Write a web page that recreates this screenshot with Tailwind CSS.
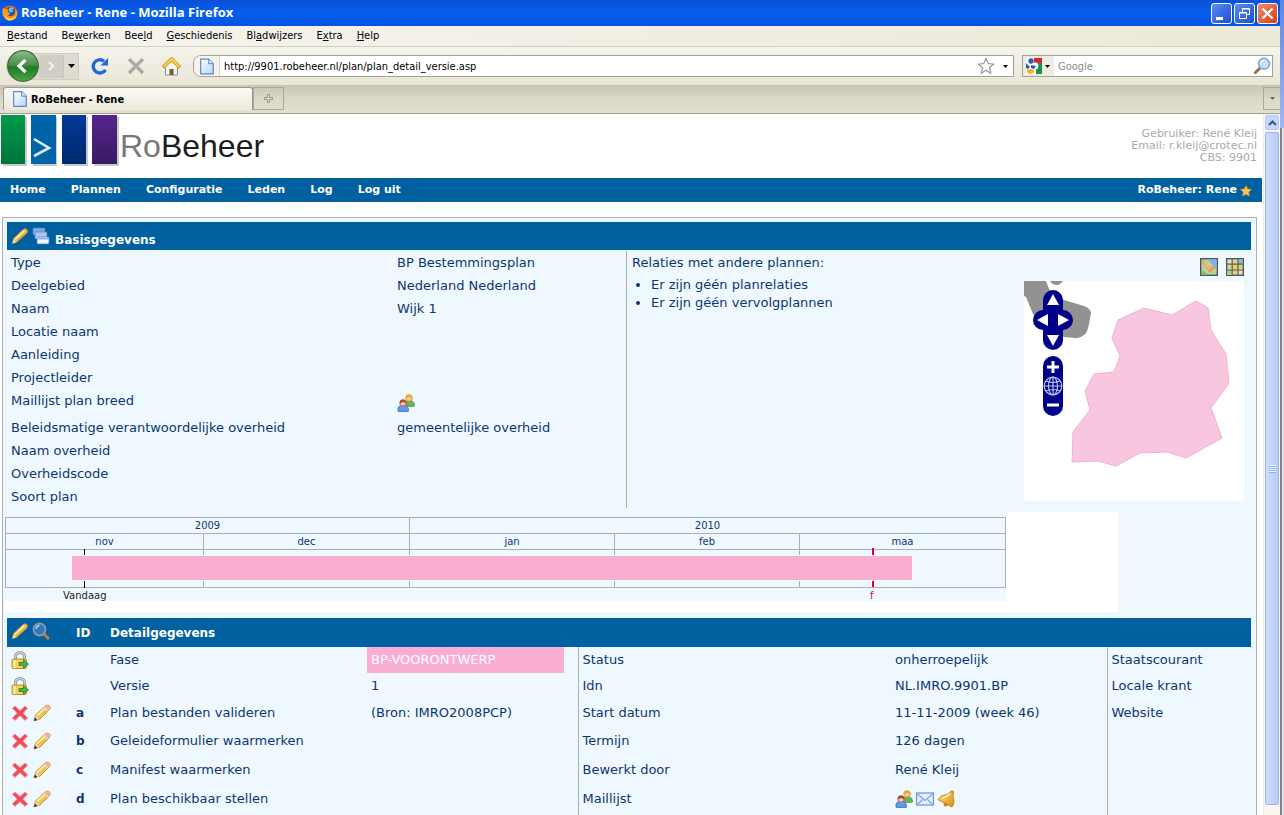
<!DOCTYPE html>
<html lang="nl">
<head>
<meta charset="utf-8">
<title>RoBeheer - Rene</title>
<script src="https://cdn.jsdelivr.net/npm/@tailwindcss/browser@4"></script>
</head>
<body class="flex h-screen overflow-hidden bg-white font-['DejaVu_Sans',Verdana,sans-serif] text-[13px] text-[#0b3672]">
<svg class="absolute size-0" aria-hidden="true">
  <defs>
    <linearGradient id="gold" x1="0" y1="0" x2="1" y2="1"><stop offset="0" stop-color="#ffe28a"/><stop offset="1" stop-color="#d98a10"/></linearGradient>
    <linearGradient id="page" x1="0" y1="0" x2="1" y2="1"><stop offset="0" stop-color="#ffffff"/><stop offset="1" stop-color="#b9d4fb"/></linearGradient>
    <linearGradient id="green" x1="0" y1="0" x2="0" y2="1"><stop offset="0" stop-color="#8fbb86"/><stop offset=".45" stop-color="#4b8f4c"/><stop offset=".55" stop-color="#1f7a26"/><stop offset="1" stop-color="#4aa843"/></linearGradient>
  </defs>
  <symbol id="i-crayon" viewBox="0 0 18 18"><path d="M1.500 16.500 2.500 11.500 12 2.500Q14.500 0.800 16 2.500 17.500 4.200 15.500 6.500L6 15Z" fill="url(#gold)" stroke="#c98a1c" stroke-width=".7"/><path d="M4 12.500 13.500 3.500" stroke="#fff0b8" stroke-width="1.600"/><path d="M1.500 16.500 2.300 12.500 5.500 15.300Z" fill="#f7e2b4"/></symbol>
  <symbol id="i-pencil" viewBox="0 0 18 18"><path d="M1 17 2.500 11 12.500 1.500Q15 0.500 16.600 2 17.800 3.600 16.500 5.500L7 15Z" fill="#f3c44f" stroke="#b98524" stroke-width=".9"/><path d="M4 11.500 13 3" stroke="#ffeaa6" stroke-width="1.800"/><path d="M12.500 1.500Q15 .5 16.600 2 17.800 3.600 16.500 5.500L14.800 7 11 3Z" fill="#f0b49a"/><path d="M11 3 14.800 7" stroke="#ddd" stroke-width="1.200"/><path d="M1 17 2.500 11 7 15Z" fill="#e9d09c"/><path d="M1 17 1.800 13.600 4.300 15.900Z" fill="#333"/></symbol>
  <symbol id="i-stack" viewBox="0 0 18 18"><g stroke="#4f7fc4" stroke-width=".7"><rect x="1" y="1" width="12" height="7" rx="1" fill="#7fa9e4"/><rect x="3" y="5" width="12" height="7" rx="1" fill="#a9c8f2"/><rect x="5" y="10" width="12" height="7" rx="1" fill="#eef5ff"/></g><path d="M5.500 11.500h11" stroke="#8fb3ea" stroke-width="2"/></symbol>
  <symbol id="i-lens" viewBox="0 0 18 18"><path d="m12 12 4 4.200" stroke="#c07c45" stroke-width="3" stroke-linecap="round"/><circle cx="7.500" cy="7.500" r="6" fill="#2f76bd" stroke="#8d97a3" stroke-width="1.800"/><path d="M4 7a4 4 0 0 1 3.500-3.500" stroke="#a8d0f5" stroke-width="1.400" fill="none"/></symbol>
  <symbol id="i-people" viewBox="0 0 18 18"><path d="M8.500 11.500q-.3-5 4-5 5 0 5 5.500-4 1.500-9-.5Z" fill="#6db45a" stroke="#3f8a37" stroke-width=".7"/><circle cx="12" cy="4" r="3.200" fill="#f8cf93" stroke="#c98d28" stroke-width=".8"/><path d="M8.700 4.500q-.3-4 3.300-4t3.500 4q-2-.2-3-2-1.500 1.800-3.800 2Z" fill="#e3ab2b"/><path d="M1 17.300q-1-6.300 5-6.300t5.500 6.300Q6 18.500 1 17.300Z" fill="#5d9aef" stroke="#2d66bd" stroke-width=".7"/><circle cx="6" cy="9" r="3.200" fill="#f8c6a0" stroke="#a8552d" stroke-width=".8"/><path d="M2.700 9.300Q2.500 5.400 6 5.400t3.500 3.900Q7 9 6.300 7.800 5 9.200 2.700 9.300Z" fill="#a84c2a"/></symbol>
  <symbol id="i-lock" viewBox="0 0 18 18"><path d="M4.500 9V5.500a4.500 4 0 0 1 9 0V9" fill="none" stroke="#8b8f90" stroke-width="3"/><path d="M4.500 9V5.500a4.500 4 0 0 1 9 0V9" fill="none" stroke="#cdd1d2" stroke-width="1.600"/><rect x="1" y="8" width="14.500" height="9.500" rx="1.200" fill="#f3d25c" stroke="#b08a22" stroke-width=".9"/><path d="M3.500 9v8" stroke="#fff0a8" stroke-width="2"/><path d="M8 11.500h4.500V8.600l5 4.400-5 4.400v-2.900H8Z" fill="#4fae44" stroke="#2b7b2a" stroke-width=".8"/></symbol>
  <symbol id="i-cross" viewBox="0 0 18 18"><path d="M4 2 9 6.500 14 2l2.700 2.300L11.800 9l4.900 4.900L14 16.400 9 11.700l-5 4.700-2.700-2.500L6.200 9 1.300 4.300Z" fill="#ee4d58" stroke="#f79aa0" stroke-width=".9"/></symbol>
  <symbol id="i-mail" viewBox="0 0 18 14"><rect x=".6" y="1" width="16.800" height="12" fill="#e3eeff" stroke="#6c93d3" stroke-width="1.200"/><path d="m1.500 2 7.500 6.500L16.500 2M1.500 12.500 6.500 7.500M16.500 12.500l-5-5" fill="none" stroke="#7ba0de" stroke-width="1.100"/></symbol>
  <symbol id="i-bell" viewBox="0 0 18 18"><path d="M1 9.500Q3.500 5 9 4.500q3-.2 5-3.500l2.500 1.200q-1.300 4 .3 7.300.8 4.500-1.800 7.500Q8 14 1 9.500Z" fill="url(#gold)" stroke="#b87a14" stroke-width=".8"/><path d="M5 8.500q4-1.500 8-5" stroke="#fff0b5" stroke-width="1.400" fill="none"/><circle cx="8.500" cy="14.500" r="1.900" fill="#c98716"/><circle cx="15.300" cy="1.800" r="1.300" fill="#c98716"/></symbol>
  <symbol id="i-doc" viewBox="0 0 14 16"><path d="M.7.700h8L13.300 5.200v10.100H.7Z" fill="url(#page)" stroke="#5c86c6" stroke-width="1.200"/><path d="M8.700.7v4.500h4.600" fill="#dfeaff" stroke="#5c86c6"/></symbol>
</svg>

<div class="flex min-w-0 flex-1 flex-col">
  <!-- window title -->
  <header class="flex h-[26px] shrink-0 items-center bg-linear-to-b from-[#0a50d8] via-[#0560ee] to-[#0452e0] pr-[2px] pl-[2px] text-white">
    <svg class="size-4" viewBox="0 0 16 16"><circle cx="8" cy="8" r="7.500" fill="#e8641b"/><circle cx="8.500" cy="6.500" r="4.500" fill="#29529c"/><path d="M7 3q3-1.500 5 .5L10 5l1.500 1.500-3 1L6.500 6Z" fill="#79b4ea"/><path d="M1 2.500 3.500 4.500Q5 3.500 6.500 4.500L5.500 6.500l2.500 2q-.5 2-2.500 1.500Q8 13 12.500 10.500 14 8 13.500 4q3.500 5 .3 9Q9 17.500 3.500 14-.8 10 1 2.500Z" fill="#f79a23"/><path d="M2 9q2.500 5 7 4.500 4-.2 5.500-4.500-.5 6-7 6.500Q3 15 2 9Z" fill="#fcd24a"/></svg>
    <h1 class="ml-[3px] flex-1 font-['Open_Sans',sans-serif] text-[13px] font-bold">RoBeheer - Rene - Mozilla Firefox</h1>
    <div class="flex gap-[2px]">
      <button aria-label="Minimaliseren" class="flex size-[21px] items-center justify-center rounded-[3px] border border-white bg-linear-to-br from-[#5c8cf4] to-[#1c4bd0]"><svg class="size-[19px]" viewBox="0 0 19 19"><path d="M4 13h7v3H4Z" fill="#fff"/></svg></button>
      <button aria-label="Verkleinen" class="flex size-[21px] items-center justify-center rounded-[3px] border border-white bg-linear-to-br from-[#5c8cf4] to-[#1c4bd0]"><svg class="size-[19px]" viewBox="0 0 19 19" fill="none" stroke="#fff"><path d="M7.500 8V4.500h7v6H12M7 5h8M4.500 8.500h7v6h-7ZM4 9h8"/></svg></button>
      <button aria-label="Sluiten" class="flex size-[21px] items-center justify-center rounded-[3px] border border-white bg-linear-to-br from-[#f08a6a] to-[#d23c10]"><svg class="size-[19px]" viewBox="0 0 19 19"><path d="m4.500 4.500 10 10m0-10-10 10" stroke="#fff" stroke-width="2.200"/></svg></button>
    </div>
  </header>

  <!-- menu -->
  <nav class="flex h-[21px] shrink-0 items-center gap-[14px] border-b border-[#d5d0bb] bg-linear-to-r from-[#f5f4ef] to-[#ece9d8] pl-[7px] font-['DejaVu_Sans_Condensed',Tahoma,sans-serif] text-[11px] text-black">
    <button><u>B</u>estand</button><button>Be<u>w</u>erken</button><button>Bee<u>l</u>d</button><button><u>G</u>eschiedenis</button><button>Bl<u>a</u>dwijzers</button><button>E<u>x</u>tra</button><button><u>H</u>elp</button>
  </nav>

  <!-- toolbar -->
  <div class="flex h-[38px] shrink-0 items-center bg-linear-to-b from-[#f5f4ec] to-[#e9e6d7] pr-[7px] pl-[6px] font-['DejaVu_Sans_Condensed',Tahoma,sans-serif] text-[11px] text-black">
    <div class="flex h-[27px] items-center rounded-l-full rounded-r-lg border border-[#d0cdc0] bg-[#dedcd1]">
      <button aria-label="Vorige"><svg class="size-8" viewBox="0 0 32 32"><circle cx="16" cy="16" r="15.300" fill="url(#green)" stroke="#3a6b3a" stroke-width="1.200"/><path d="m18.500 10-6.500 6 6.500 6" fill="none" stroke="#fff" stroke-width="3.200"/></svg></button>
      <button aria-label="Volgende" class="flex h-[23px] w-[25px] items-center justify-center border-r border-[#c8c5ba] bg-[#cfcdc4]"><svg class="size-3" viewBox="0 0 12 12"><path d="m4 2 4 4-4 4" fill="none" stroke="#f2f2ee" stroke-width="2.400"/></svg></button>
      <button aria-label="Geschiedenis" class="w-[14px] pl-1"><svg class="h-[4px] w-[7px]" viewBox="0 0 7 4"><path d="M0 0h7L3.500 4Z"/></svg></button>
    </div>
    <button aria-label="Vernieuwen" class="ml-3"><svg class="size-[18px]" viewBox="0 0 18 18"><path d="M14.500 12.800A6.600 6.600 0 1 1 13 4.300" fill="none" stroke="#2368d8" stroke-width="3.400"/><path d="M17 1v7.500H9.500Z" fill="#2368d8"/></svg></button>
    <button aria-label="Stoppen" class="ml-[18px]"><svg class="size-[18px]" viewBox="0 0 18 18"><path d="m2 2 14 14M16 2 2 16" stroke="#aaa9a3" stroke-width="3.200"/></svg></button>
    <button aria-label="Startpagina" class="ml-[17px]"><svg class="size-[19px]" viewBox="0 0 19 19"><path d="M3.500 9v9h12V9l-6-5Z" fill="#f6f4ee" stroke="#8a8fa0"/><path d="M7.500 18v-6h4v6Z" fill="#765b3a"/><path d="m1 10.500 8.500-8.500L18 10.500" fill="none" stroke="#c58a12" stroke-width="3.600"/><path d="m1.500 10 8-8 8 8" fill="none" stroke="#fbd34f" stroke-width="2.200"/></svg></button>
    <div class="ml-[12px] flex h-[22px] flex-1 items-center rounded-l-lg border border-[#a5a396] bg-white pr-[5px]">
      <div class="flex h-full w-[26px] items-center justify-center rounded-l-lg border-r border-[#dcd9cc] bg-[#f5f3ea]"><svg class="h-[17px] w-[14px]"><use href="#i-doc"/></svg></div>
      <input aria-label="Adres" value="http://9901.robeheer.nl/plan/plan_detail_versie.asp" class="min-w-0 flex-1 pt-[2px] pl-[4px] outline-none">
      <button aria-label="Bladwijzer"><svg class="size-[18px]" viewBox="0 0 18 18"><path d="m9 1.500 2.200 5 5.300.6-4 3.600 1.200 5.500L9 13.300l-4.700 2.900 1.200-5.500-4-3.600 5.300-.6Z" fill="#fff" stroke="#92969e" stroke-width="1.200"/></svg></button>
      <button aria-label="Adressen" class="ml-2"><svg class="h-[3px] w-[5px]" viewBox="0 0 5 3"><path d="M0 0h5L2.500 3Z"/></svg></button>
    </div>
    <div class="ml-[8px] flex h-[22px] w-[251px] items-center border border-[#a5a396] bg-white pr-[1px]">
      <button aria-label="Zoekmachine" class="flex h-full w-[31px] items-center gap-[3px] bg-[#eeece2] pl-[3px]"><svg class="size-4" viewBox="0 0 16 16"><path d="M0 0h16v16H0Z" fill="#fff"/><path d="M8 0h8v5H8Z" fill="#d9232e"/><path d="M10 5h6v11h-6Z" fill="#14934a"/><circle cx="9" cy="8" r="3.400" fill="#fff"/><circle cx="5" cy="3" r="2.700" fill="#2a5db0"/><path d="m0 5 4 4-2 2-2-1Z" fill="#2a5db0"/><path d="m5 7 5 1-2 3-3-1Z" fill="#2a5db0"/><ellipse cx="4.500" cy="13.300" rx="3.600" ry="2.400" fill="#f0b616"/></svg><svg class="h-[3px] w-[5px]" viewBox="0 0 5 3"><path d="M0 0h5L2.500 3Z"/></svg></button>
      <input aria-label="Zoeken" placeholder="Google" class="min-w-0 flex-1 pt-[2px] pl-[4px] outline-none placeholder:text-[#8c8c8c]">
      <button aria-label="Zoek"><svg class="size-[18px]" viewBox="0 0 18 18"><path d="m7.500 10.500-6 6" stroke="#9b6a4a" stroke-width="2.800"/><circle cx="11" cy="6.800" r="5.500" fill="#bfe0fa" stroke="#7fa4c4" stroke-width="1.400"/><path d="M8 6a3 3 0 0 1 3-2.500" stroke="#fff" stroke-width="1.300" fill="none"/></svg></button>
    </div>
  </div>

  <!-- tabs -->
  <div class="flex h-[29px] shrink-0 items-end border-b border-[#a09d8c] bg-[#f1efe5]">
    <div class="flex h-full flex-1 items-end bg-linear-to-b from-[#c9c5b5] via-[#dcd8c8] to-[#e4e0cf] pb-[3px] pl-[3px]">
      <div class="flex h-[23px] w-[250px] items-center gap-1 rounded-t-[3px] border border-b-0 border-[#9c9989] bg-linear-to-b from-[#fbfaf6] to-[#ece9db] pl-[9px] font-['DejaVu_Sans_Condensed',Tahoma,sans-serif] text-[11px] font-bold text-black"><svg class="h-4 w-[14px]"><use href="#i-doc"/></svg><span class="pt-[2px]">RoBeheer - Rene</span></div>
      <button aria-label="Nieuw tabblad" class="flex h-[23px] w-[31px] items-center justify-center border border-[#a9a696]"><svg class="size-[9px]" viewBox="0 0 9 9"><path d="M3.500.5h2v3h3v2h-3v3h-2v-3h-3v-2h3Z" fill="#ddd9cb" stroke="#8b897d" stroke-width=".8"/></svg></button>
      <div class="flex-1"></div>
      <button aria-label="Alle tabbladen" class="flex h-[23px] w-[17px] items-center justify-center border-y border-l border-[#a9a696]"><svg class="h-[3px] w-[5px]" viewBox="0 0 5 3"><path d="M0 0h5L2.500 3Z" fill="#6b695e"/></svg></button>
    </div>
  </div>

  <div class="flex min-h-0 flex-1">
    <main class="flex min-w-0 flex-1 flex-col overflow-hidden">
      <div class="flex h-[64px] shrink-0 items-start pr-[6px]">
        <svg class="h-[54px] w-[120px]" viewBox="0 0 120 54" role="img" aria-label="Logo">
          <defs><linearGradient id="l1" x2="0" y2="1"><stop stop-color="#009a4a"/><stop offset="1" stop-color="#00753a"/></linearGradient><linearGradient id="l3" x2="0" y2="1"><stop stop-color="#003a96"/><stop offset="1" stop-color="#002a6c"/></linearGradient><linearGradient id="l4" x2="0" y2="1"><stop stop-color="#55248c"/><stop offset="1" stop-color="#3a1a64"/></linearGradient></defs>
          <g fill="#c9c9d0"><path d="M3 3h24v49H3ZM33 3h24v49H33ZM64 3h24v49H64ZM94 3h25v49H94Z"/></g>
          <path d="M1 1h24v49H1Z" fill="url(#l1)"/><path d="M31 1h25v49H31Z" fill="#0065a8"/><path d="M62 1h24v49H62Z" fill="url(#l3)"/><path d="M92 1h25v49H92Z" fill="url(#l4)"/>
          <path d="m34 25 15 9-15 8" fill="none" stroke="#dcebf7" stroke-width="2.600"/>
        </svg>
        <div class="flex-1 pt-[8px] font-['Liberation_Sans',Arial,sans-serif] text-[32px] text-[#1d1d1f]"><span class="text-[#77787b]">Ro</span>Beheer</div>
        <div class="pt-[14px] text-right text-[11px] leading-3 text-[#a9a9a9]">Gebruiker: René Kleij<br>Email: r.kleij@crotec.nl<br>CBS: 9901</div>
      </div>

      <nav class="mr-[1px] flex h-6 shrink-0 items-center gap-[25px] bg-[#0060a0] pt-[1px] pr-[10px] pl-[10px] text-[11px] font-bold text-white">
        <a href="#">Home</a><a href="#">Plannen</a><a href="#">Configuratie</a><a href="#">Leden</a><a href="#">Log</a><a href="#">Log uit</a>
        <div class="ml-auto flex items-center gap-[3px]">RoBeheer: Rene<svg class="size-3" viewBox="0 0 12 12"><path d="m6 .5 1.700 3.400 3.800.5-2.800 2.700.7 4L6 9.300l-3.400 1.800.7-4L.5 4.400l3.800-.5Z" fill="#f8c64a" stroke="#d8952a" stroke-width=".6"/></svg></div>
      </nav>

      <div class="mt-[15px] mr-[6px] ml-[2px] flex flex-1 flex-col border border-b-0 border-[#a9b0b6] bg-[#f0f8ff]">
        <h2 class="mt-1 mr-[5px] ml-1 flex h-7 shrink-0 items-center bg-[#0060a0] px-1 text-[12px] font-bold text-white"><svg class="size-[18px]"><use href="#i-crayon"/></svg><svg class="ml-[3px] size-[18px]"><use href="#i-stack"/></svg><span class="ml-[5px] pt-[7px]">Basisgegevens</span></h2>

        <section class="mt-[1px] mr-[5px] ml-1 flex h-[257px] shrink-0">
          <table class="w-[620px] table-fixed border-r border-[#a9b0b6] text-left">
            <colgroup><col class="w-[386px]"><col></colgroup>
            <tbody>
              <tr class="h-[23px]"><th class="pl-1 font-normal">Type</th><td class="pl-1">BP Bestemmingsplan</td></tr>
              <tr class="h-[23px]"><th class="pl-1 font-normal">Deelgebied</th><td class="pl-1">Nederland Nederland</td></tr>
              <tr class="h-[23px]"><th class="pl-1 font-normal">Naam</th><td class="pl-1">Wijk 1</td></tr>
              <tr class="h-[23px]"><th class="pl-1 font-normal">Locatie naam</th><td></td></tr>
              <tr class="h-[23px]"><th class="pl-1 font-normal">Aanleiding</th><td></td></tr>
              <tr class="h-[23px]"><th class="pl-1 font-normal">Projectleider</th><td></td></tr>
              <tr class="h-[27px]"><th class="pb-1 pl-1 font-normal">Maillijst plan breed</th><td class="pl-1"><svg class="size-[18px]"><use href="#i-people"/></svg></td></tr>
              <tr class="h-[23px]"><th class="pl-1 font-normal">Beleidsmatige verantwoordelijke overheid</th><td class="pl-1">gemeentelijke overheid</td></tr>
              <tr class="h-[23px]"><th class="pl-1 font-normal">Naam overheid</th><td></td></tr>
              <tr class="h-[23px]"><th class="pl-1 font-normal">Overheidscode</th><td></td></tr>
              <tr class="h-[23px]"><th class="pl-1 font-normal">Soort plan</th><td></td></tr>
            </tbody>
          </table>
          <div class="flex-1 pt-[2px] pl-[5px]">
            <p>Relaties met andere plannen:</p>
            <ul class="mt-[3px] list-disc pl-[19px] leading-[18px]"><li>Er zijn géén planrelaties</li><li>Er zijn géén vervolgplannen</li></ul>
          </div>
          <div class="mr-[7px] w-[220px] pt-[7px]">
            <div class="flex h-[23px] justify-end gap-2">
              <button aria-label="Kaart bewerken" class="size-[18px]"><svg viewBox="0 0 18 18"><rect x=".7" y=".7" width="16.600" height="16.600" fill="#b9d2a0" stroke="#4c5560" stroke-width="1.400"/><path d="M8 1.500h8.500v11Z" fill="#7fb6e6"/><path d="M1.500 12 9 16.500H1.500Z" fill="#7cc070"/><path d="m3 2.500 7 10.500 4-5" fill="none" stroke="#f29a3c" stroke-width="2.600"/><path d="m4 3.500 5.500 8" stroke="#fbe3a0"/></svg></button>
              <button aria-label="Raster" class="size-[18px]"><svg viewBox="0 0 18 18"><rect x=".7" y=".7" width="16.600" height="16.600" fill="#dfe3c0" stroke="#4c5560" stroke-width="1.400"/><path d="M12 1h5v5h-5Z" fill="#8ab2de"/><path d="M1 12h5v5H1Z" fill="#a9cf8e"/><path d="M2 9h14M9 2v14" stroke="#f0c868" stroke-width="3"/><path d="M6.200 1v16M12 1v16M1 6.200h16M1 12h16" stroke="#59604a" stroke-width="1.200"/></svg></button>
            </div>
            <svg class="size-[220px] bg-white" viewBox="0 0 220 220" role="img" aria-label="Plankaart">
              <path d="M0 0h22l3 8q5 9 15 11l20 6q7 3 7 7l-2 11q-2 10-5 11-5 4-9 3l-11-1-20-10L9 33 2 16 0 15Z" fill="#929292"/><path d="M26 0h13q-3 4-6 4-5 0-7-4Z" fill="#929292"/>
              <path d="m94 39 26-12 28 7 24-14 12 7 3 22 15 24 3 29-18 25 11 30-36 20-19-6-27 1-24 13-18-5-26 1 1-30 17-22-5-19 9-17 20-2 6-16-8-18Z" fill="#f9c6df" stroke="#ecb2cf"/>
              <g fill="#00008b"><rect x="19" y="9" width="20" height="60" rx="10"/><rect x="9" y="29" width="40" height="20" rx="10"/><rect x="19" y="75" width="20" height="60" rx="10"/></g>
              <path d="m29 13 6 11H23ZM29 65l6-11H23ZM13 39l11-6v12ZM45 39l-11-6v12Z" fill="#fff"/>
              <path d="M23 86h12M29 80v12M23 124h12" stroke="#fff" stroke-width="3"/>
              <g fill="none" stroke="#b9c6ea" stroke-width="1.200"><circle cx="29" cy="105" r="8.800"/><ellipse cx="29" cy="105" rx="4.500" ry="8.800"/><path d="M20 105h18M29 96v18M22 100q7 3 14 0M22 110q7-3 14 0"/></g>
            </svg>
          </div>
        </section>

        <!-- timeline -->
        <section class="mt-1 ml-[1px] h-[100px] w-[1114px] shrink-0 bg-white text-[10px]">
          <div class="relative h-[89px] w-[1002px] bg-[#f0f8ff] pt-[5px] pl-[1px]">
            <table class="w-[1001px] table-fixed border-collapse text-center leading-3 [&_td]:border [&_td]:border-[#a9b0b6] [&_td]:p-0 [&_th]:border [&_th]:border-[#a9b0b6] [&_th]:p-0 [&_th]:font-normal">
              <colgroup><col class="w-[198px]"><col class="w-[206px]"><col class="w-[205px]"><col class="w-[185px]"><col></colgroup>
              <tbody>
                <tr class="h-4"><th colspan="2">2009</th><th colspan="3">2010</th></tr>
                <tr class="h-4"><th>nov</th><th>dec</th><th>jan</th><th>feb</th><th>maa</th></tr>
                <tr class="h-[38px]"><td></td><td></td><td></td><td></td><td></td></tr>
              </tbody>
            </table>
            <div class="absolute top-[37px] left-[80px] h-[39px] w-[1px] bg-black"></div>
            <div class="absolute top-[36px] left-[868px] h-[39px] w-[2px] bg-[#e0002a]"></div>
            <div class="absolute top-[43px] left-[68px] h-[26px] w-[840px] border-y border-[#f0f8ff] bg-[#f9aed2]"></div>
            <div class="absolute top-[78px] left-[59px] leading-3 text-[#222]">Vandaag</div>
            <div class="absolute top-[78px] left-[866px] leading-3 text-[#d01030]">f</div>
          </div>
        </section>

        <!-- details -->
        <table class="mt-[6px] mr-[5px] ml-1 table-fixed text-left">
          <colgroup><col class="w-[65px]"><col class="w-[34px]"><col class="w-[261px]"><col class="w-[197px]"><col class="w-[14px]"><col class="w-[314px]"><col class="w-[215px]"><col></colgroup>
          <thead class="bg-[#0060a0] text-[12px] text-white">
            <tr class="h-[29px]"><th class="pb-1 pl-1"><span class="flex gap-[3px]"><svg class="size-[18px]"><use href="#i-crayon"/></svg><svg class="size-[18px]"><use href="#i-lens"/></svg></span></th><th class="pl-1">ID</th><th class="pl-1" colspan="6">Detailgegevens</th></tr>
          </thead>
          <tbody>
            <tr class="h-[26px]"><td class="pl-1"><svg class="size-[18px]"><use href="#i-lock"/></svg></td><td></td><td class="pl-1">Fase</td><td class="bg-[#f9aed2] pl-1 text-white">BP-VOORONTWERP</td><td class="border-r border-[#a9b0b6]"></td><td class="pl-1">Status</td><td class="border-r border-[#a9b0b6] pl-[3px]">onherroepelijk</td><td class="pl-1">Staatscourant</td></tr>
            <tr class="h-[26px]"><td class="pl-1"><svg class="size-[18px]"><use href="#i-lock"/></svg></td><td></td><td class="pl-1">Versie</td><td class="pl-1">1</td><td class="border-r border-[#a9b0b6]"></td><td class="pl-1">Idn</td><td class="border-r border-[#a9b0b6] pl-[3px]">NL.IMRO.9901.BP</td><td class="pl-1">Locale krant</td></tr>
            <tr class="h-[27px]"><td class="pl-1"><span class="flex gap-1"><svg class="size-[18px]"><use href="#i-cross"/></svg><svg class="size-[18px]"><use href="#i-pencil"/></svg></span></td><th class="pl-1 text-[12px]">a</th><td class="pl-1">Plan bestanden valideren</td><td class="pl-1">(Bron: IMRO2008PCP)</td><td class="border-r border-[#a9b0b6]"></td><td class="pl-1">Start datum</td><td class="border-r border-[#a9b0b6] pl-[3px]">11-11-2009 (week 46)</td><td class="pl-1">Website</td></tr>
            <tr class="h-[29px]"><td class="pl-1"><span class="flex gap-1"><svg class="size-[18px]"><use href="#i-cross"/></svg><svg class="size-[18px]"><use href="#i-pencil"/></svg></span></td><th class="pl-1 text-[12px]">b</th><td class="pl-1">Geleideformulier waarmerken</td><td></td><td class="border-r border-[#a9b0b6]"></td><td class="pl-1">Termijn</td><td class="border-r border-[#a9b0b6] pl-[3px]">126 dagen</td><td></td></tr>
            <tr class="h-[29px]"><td class="pl-1"><span class="flex gap-1"><svg class="size-[18px]"><use href="#i-cross"/></svg><svg class="size-[18px]"><use href="#i-pencil"/></svg></span></td><th class="pl-1 text-[12px]">c</th><td class="pl-1">Manifest waarmerken</td><td></td><td class="border-r border-[#a9b0b6]"></td><td class="pl-1">Bewerkt door</td><td class="border-r border-[#a9b0b6] pl-[3px]">René Kleij</td><td></td></tr>
            <tr class="h-[31px] [&>*]:pb-[2px]"><td class="pl-1"><span class="flex gap-1"><svg class="size-[18px]"><use href="#i-cross"/></svg><svg class="size-[18px]"><use href="#i-pencil"/></svg></span></td><th class="pl-1 text-[12px]">d</th><td class="pl-1">Plan beschikbaar stellen</td><td></td><td class="border-r border-[#a9b0b6]"></td><td class="pl-1">Maillijst</td><td class="border-r border-[#a9b0b6] pl-[3px]"><span class="flex items-center gap-[3px]"><svg class="size-[18px]"><use href="#i-people"/></svg><svg class="h-[14px] w-[18px]"><use href="#i-mail"/></svg><svg class="size-[18px]"><use href="#i-bell"/></svg></span></td><td></td></tr>
          </tbody>
        </table>
      </div>
    </main>

    <!-- scrollbar -->
    <div class="flex w-[17px] flex-col border-l border-[#eeede5] bg-[#f7f7f3] px-[1px] pt-[1px] pb-[10px]">
      <button aria-label="Omhoog" class="flex h-[15px] items-center justify-center rounded-[2px] border border-[#b4c8f6] bg-[#c6d6fc]"><svg class="h-[6px] w-[9px]" viewBox="0 0 9 6"><path d="m1 5 3.500-3.500L8 5" fill="none" stroke="#3d5484" stroke-width="2"/></svg></button>
      <div class="mt-[2px] flex flex-1 items-center justify-center rounded-[2px] border border-[#9fb5ee] bg-linear-to-r from-[#cddcfd] to-[#b9cbf8]"><svg class="h-2 w-[7px]" viewBox="0 0 7 8"><path d="M0 .5h7M0 2.500h7M0 4.500h7M0 6.500h7" stroke="#eef4fe"/><path d="M0 1.500h7M0 3.500h7M0 5.500h7M0 7.500h7" stroke="#8cb0f8"/></svg></div>
    </div>
  </div>
</div>

<!-- window behind -->
<div class="flex w-1 shrink-0 flex-col"><div class="h-[128px] bg-linear-to-b from-[#5f86e2] to-[#9db8f2]"></div><div class="flex-1 border-l-2 border-[#848484] bg-[#e4e6ea]"></div></div>
</body>
</html>
